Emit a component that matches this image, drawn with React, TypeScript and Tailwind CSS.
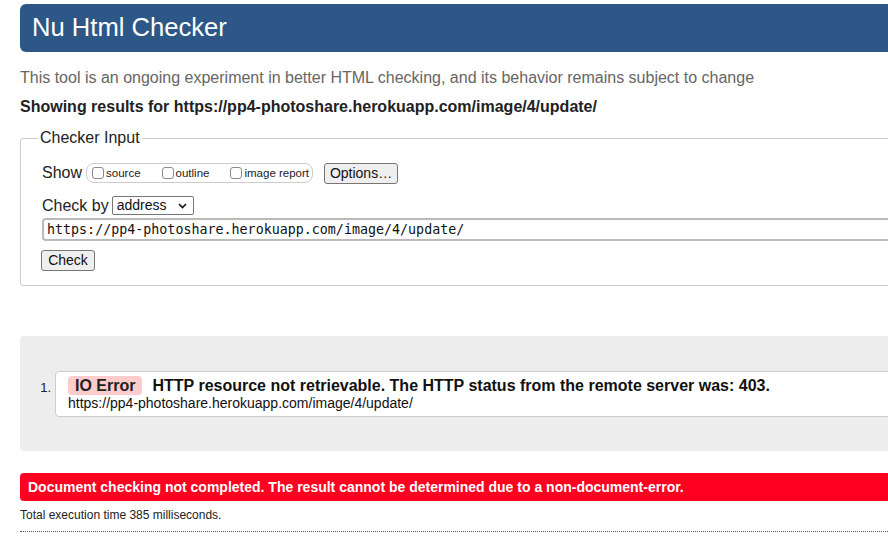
import React from "react"

const url = "https://pp4-photoshare.herokuapp.com/image/4/update/"

// small mac-style checkbox
const Box = () => (
  <span className="inline-block h-[12px] w-[12px] rounded-[3px] border border-[#8a8a8a] bg-white" />
)

const ShowOption = ({ label }: { label: string }) => (
  <span className="flex items-center gap-[2px]">
    <Box />
    <span className="text-[11.5px] leading-[13px] text-[#222]">{label}</span>
  </span>
)

const App = () => {
  return (
    <div className="h-[554px] w-[888px] overflow-hidden bg-white font-['Liberation_Sans',Arial,sans-serif] text-black">
      <div className="w-[940px] pl-[20px] pt-[4px]">
        {/* header */}
        <div className="flex h-[48px] items-center rounded-[6px] bg-[#2c5787] pl-[12px] text-[25.6px] leading-none text-white">
          Nu Html Checker
        </div>

        <p className="mt-[16px] text-[16px] leading-[20px] text-[#666]">
          This tool is an ongoing experiment in better HTML checking, and its behavior remains subject to change
        </p>
        <p className="mt-[9px] text-[16px] font-bold leading-[20px] text-[#222]">
          Showing results for {url}
        </p>

        {/* checker input */}
        <fieldset className="mt-[11px] rounded-[3px] border border-[#ccc] pb-[14px] pl-[21px]">
          <legend className="ml-[-4px] px-[2px] text-[16px] leading-[20px] text-[#222]">Checker Input</legend>

          <div className="mt-[14px] flex h-[22px] items-center">
            <span className="text-[16px] text-[#222]">Show</span>
            <div className="ml-[4px] flex h-[20px] w-[227px] items-center gap-[21px] rounded-[8px] border border-[#ccc] pl-[5px]">
              <ShowOption label="source" />
              <ShowOption label="outline" />
              <ShowOption label="image report" />
            </div>
            <div className="ml-[11px] flex h-[21px] w-[74px] items-center justify-center rounded-[3px] border border-[#767676] bg-[#efefef] text-[14px] text-[#111]">
              Options…
            </div>
          </div>

          <div className="mt-[12px] flex h-[19px] items-center">
            <span className="text-[16px] text-[#222]">Check by</span>
            <div className="ml-[3px] flex h-[19px] w-[82px] items-center justify-between rounded-[2px] border border-[#767676] bg-white pl-[4px] pr-[6px] text-[14px] text-[#111]">
              <span>address</span>
              <svg width="9" height="6" viewBox="0 0 9 6" fill="none">
                <path d="M1 1l3.5 3.5L8 1" stroke="#111" strokeWidth="1.6" />
              </svg>
            </div>
          </div>

          <div className="mt-[3px] flex h-[23px] items-center rounded-[4px] border-2 border-[#bababa] pl-[3px] font-['DejaVu_Sans_Mono',monospace] text-[13.33px] text-[#111]">
            {url}
          </div>

          <div className="ml-[-1px] mt-[9px] flex h-[21px] w-[54px] items-center justify-center rounded-[3px] border border-[#767676] bg-[#efefef] text-[14px] text-[#111]">
            Check
          </div>
        </fieldset>

        {/* results */}
        <div className="mt-[50px] h-[115px] rounded-[4px] bg-[#ededed] pt-[35px]">
          <div className="flex">
            <span className="w-[35px] pr-[4px] pt-[9px] text-right text-[13px] leading-[15px] text-[#222]">1.</span>
            <div className="flex-1 rounded-[4px] border border-[#ccc] bg-white pb-[5px] pl-[12px] pt-[4px]">
              <div className="flex items-center">
                <span className="flex h-[19px] items-center rounded-[4px] bg-[#fcc] px-[7px] text-[16px] font-bold text-[#222]">
                  IO Error
                </span>
                <span className="ml-[10px] text-[16px] font-bold leading-[19px] text-[#111]">
                  HTTP resource not retrievable. The HTTP status from the remote server was: 403.
                </span>
              </div>
              <div className="text-[14px] leading-[16px] text-[#111]">{url}</div>
            </div>
          </div>
        </div>

        <div className="mt-[22px] flex h-[28px] items-center rounded-[4px] bg-[#ff0020] pl-[8px] text-[14px] font-bold text-white">
          Document checking not completed. The result cannot be determined due to a non-document-error.
        </div>

        <p className="mt-[7px] text-[12px] leading-[14px] text-[#222]">Total execution time 385 milliseconds.</p>
        <div className="mt-[9px] border-b border-dotted border-[#555]" />
      </div>
    </div>
  )
}

export default App
